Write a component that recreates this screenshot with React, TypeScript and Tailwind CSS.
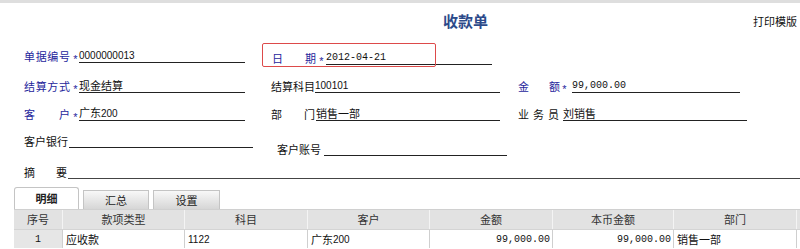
import React from 'react';

const cjk = { fontFamily: '"Noto Sans CJK SC", "Liberation Sans", sans-serif' };
const mono = { fontFamily: '"Liberation Mono", "Noto Sans CJK SC", monospace' };
const sans = { fontFamily: '"Liberation Sans", sans-serif', fontSize: 10 };

function Spread({ chars, w, blue }: { chars: string[]; w: number; blue?: boolean }) {
  return (
    <div
      className={`flex justify-between shrink-0 whitespace-nowrap text-[11px] leading-[13px] ${blue ? 'text-[#26269c]' : 'text-[#111]'}`}
      style={{ width: w }}
    >
      {chars.map((c, i) => (
        <span key={i}>{c}</span>
      ))}
    </div>
  );
}

function Star() {
  return (
    <span
      className="shrink-0 w-[7px] text-center text-[11px] leading-[13px] text-[#26269c] translate-y-[3px]"
      style={{ fontFamily: '"Liberation Sans", sans-serif' }}
    >
      *
    </span>
  );
}

function Value({ w, children, m }: { w: number; children?: React.ReactNode; m?: boolean }) {
  return (
    <div
      className="shrink-0 border-b border-[#222] text-[11px] leading-[13px] text-[#111] whitespace-nowrap"
      style={{ width: w, ...(m ? mono : {}) }}
    >
      {children}&nbsp;
    </div>
  );
}

const cols = [
  { t: '序号', w: 49 },
  { t: '款项类型', w: 122 },
  { t: '科目', w: 123 },
  { t: '客户', w: 122 },
  { t: '金额', w: 123 },
  { t: '本币金额', w: 121 },
  { t: '部门', w: 123 },
];

export default function App() {
  return (
    <div className="relative w-[800px] h-[249px] bg-white overflow-hidden" style={cjk}>
      {/* top strip */}
      <div className="h-[3px] bg-[#dedede]" />

      {/* header */}
      <div className="flex h-[41px] pt-[9px]">
        <h1 className="ml-[443px] text-[15px] leading-[18px] font-bold text-[#2c4a8a]">收款单</h1>
        <span className="ml-auto mr-[3px] mt-[3px] text-[11px] leading-[13px] text-[#111]">打印模版</span>
      </div>

      {/* row 1 */}
      <div className="flex items-end h-[19px] pl-[24px]">
        <Spread chars={['单', '据', '编', '号']} w={46} blue />
        <span className="w-[2px]" />
        <Star />
        <Value w={166}>
          <span style={sans}>0000000013</span>
        </Value>
        <div className="flex items-end ml-[27px] translate-y-[2px]">
          <Spread chars={['日', '期']} w={44} blue />
          <span className="w-[2px]" />
          <Star />
          <span className="w-[1px]" />
          <Value w={166} m>
            <span className="text-[10px]">2012-04-21</span>
          </Value>
        </div>
      </div>

      {/* row 2 */}
      <div className="flex items-end h-[30px] pl-[24px]">
        <Spread chars={['结', '算', '方', '式']} w={46} blue />
        <span className="w-[2px]" />
        <Star />
        <Value w={166}>现金结算</Value>
        <span className="w-[26px]" />
        <Spread chars={['结算科目']} w={44} />
        <Value w={185}>
          <span style={sans}>100101</span>
        </Value>
        <span className="w-[18px]" />
        <Spread chars={['金', '额']} w={42} blue />
        <span className="w-[1px]" />
        <Star />
        <span className="w-[4px]" />
        <Value w={168} m>
          <span className="text-[10px]">99,000.00</span>
        </Value>
      </div>

      {/* row 3 */}
      <div className="flex items-end h-[28px] pl-[24px]">
        <Spread chars={['客', '户']} w={46} blue />
        <span className="w-[2px]" />
        <Star />
        <Value w={166}>
          广东<span style={sans}>200</span>
        </Value>
        <span className="w-[26px]" />
        <Spread chars={['部', '门']} w={44} />
        <span className="w-[1px]" />
        <Value w={184}>销售一部</Value>
        <span className="w-[18px]" />
        <Spread chars={['业', '务', '员']} w={41} />
        <span className="w-[4px]" />
        <Value w={184}>刘销售</Value>
      </div>

      {/* row 4 */}
      <div className="flex items-start h-[36px] pl-[24px] pt-[13px]">
        <div className="flex items-end">
          <Spread chars={['客户银行']} w={44} />
          <span className="w-[1px]" />
          <Value w={184} />
        </div>
        <div className="flex items-end ml-[24px] mt-[8px]">
          <Spread chars={['客户账号']} w={44} />
          <span className="w-[3px]" />
          <Value w={183} />
        </div>
      </div>

      {/* row 5 */}
      <div className="flex items-end h-[22px] pl-[24px]">
        <Spread chars={['摘', '要']} w={43} />
        <span className="w-[1px]" />
        <div className="flex-1 border-b border-[#444] h-[13px]" />
      </div>

      {/* tabs */}
      <div className="flex items-end h-[22px] mt-[8px] pl-[14px] gap-[4px]">
        <div className="w-[65px] h-[22px] border border-b-0 border-[#c4c4c4] rounded-t-[3px] bg-white flex items-center justify-center text-[11px] font-bold text-[#222]">
          明细
        </div>
        <div className="w-[66px] h-[19px] border border-b-0 border-[#c4c4c4] bg-gradient-to-b from-[#f8f8f8] to-[#d6d6d6] flex items-center justify-center text-[11px] text-[#222]">
          汇总
        </div>
        <div className="w-[67px] h-[19px] border border-b-0 border-[#c4c4c4] bg-gradient-to-b from-[#f8f8f8] to-[#d6d6d6] flex items-center justify-center text-[11px] text-[#222]">
          设置
        </div>
      </div>

      {/* table */}
      <div className="ml-[14px] w-[786px] border-t border-[#d0d0d0]">
        <div className="flex h-[19px] bg-[#e2e2e2]">
          {cols.map((c) => (
            <div
              key={c.t}
              className="shrink-0 border-r border-[#f4f4f4] flex items-center justify-center text-[11px] text-[#333]"
              style={{ width: c.w }}
            >
              {c.t}
            </div>
          ))}
        </div>
        <div className="flex h-[19px] border-t border-[#d4d4d4] text-[11px] text-[#111]">
          <div className="shrink-0 w-[49px] bg-[#e6e6e6] border-r border-[#cfcfcf] flex items-center justify-center" style={mono}>
            <span className="text-[10px]">1</span>
          </div>
          <div className="shrink-0 w-[122px] border-r border-[#cfcfcf] flex items-center pl-[3px]">应收款</div>
          <div className="shrink-0 w-[123px] border-r border-[#cfcfcf] flex items-center pl-[3px]" style={sans}>
            1122
          </div>
          <div className="shrink-0 w-[122px] border-r border-[#cfcfcf] flex items-center pl-[3px]">
            广东<span style={sans}>200</span>
          </div>
          <div className="shrink-0 w-[123px] border-r border-[#cfcfcf] flex items-center justify-end pr-[2px]" style={mono}>
            <span className="text-[10px]">99,000.00</span>
          </div>
          <div className="shrink-0 w-[121px] border-r border-[#cfcfcf] flex items-center justify-end pr-[2px]" style={mono}>
            <span className="text-[10px]">99,000.00</span>
          </div>
          <div className="shrink-0 w-[123px] border-r border-[#cfcfcf] flex items-center pl-[3px]">销售一部</div>
        </div>
      </div>

      {/* highlight box */}
      <div className="absolute left-[262px] top-[43px] w-[174px] h-[24px] border border-[#dd4a4a] rounded-[2px] pointer-events-none" />
    </div>
  );
}
